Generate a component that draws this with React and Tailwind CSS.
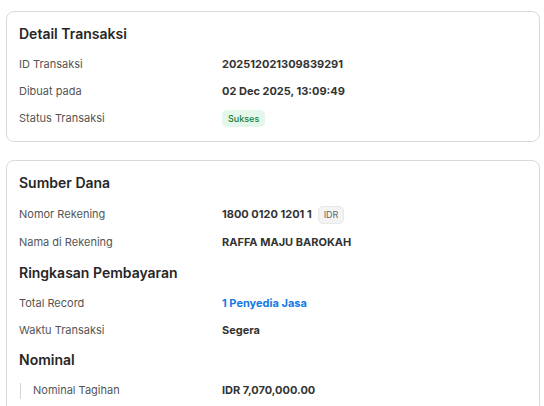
import React from 'react';

const Row = ({ label, children, nested, tall }) => (
  <div className={`flex items-center ${tall ? 'h-[29px]' : 'h-[27px]'}`}>
    {nested ? (
      <div className="w-[203px] flex items-center">
        <div className="w-px h-[16px] bg-[#d4d4d4] ml-[1px] mr-[12px]" />
        <span className="text-[11px] text-[#555555]">{label}</span>
      </div>
    ) : (
      <span className="w-[203px] text-[11px] text-[#555555]">{label}</span>
    )}
    <div className="flex items-center gap-[6px] text-[11px] font-bold text-[#333333]">{children}</div>
  </div>
);

const Heading = ({ children }) => (
  <h2 className="text-[14px] leading-[20px] font-semibold text-[#262626]">{children}</h2>
);

const Card = ({ children, className = '' }) => (
  <div className={`border border-[#d9d9d9] rounded-lg px-[12px] pt-[12px] bg-white ${className}`}>{children}</div>
);

export default function App() {
  return (
    <div className="min-h-screen bg-white pt-[11px] pl-[6px] pr-[4px] flex flex-col gap-[18px]" style={{ fontFamily: 'Inter, "Noto Sans", sans-serif' }}>
      <Card className="pb-[9px]">
        <Heading>Detail Transaksi</Heading>
        <div className="mt-[7px]">
          <Row label="ID Transaksi">202512021309839291</Row>
          <Row label="Dibuat pada">02 Dec 2025, 13:09:49</Row>
          <Row label="Status Transaksi">
            <span className="px-[6px] h-[17px] flex items-center rounded-[5px] bg-[#e5f6ea] text-[#17803d] text-[9px] font-medium">Sukses</span>
          </Row>
        </div>
      </Card>
      <Card className="pb-[8px]">
        <Heading>Sumber Dana</Heading>
        <div className="mt-[7px]">
          <Row label="Nomor Rekening" tall>
            <span>1800 0120 1201 1</span>
            <span className="px-[5px] h-[18px] flex items-center rounded-[5px] bg-[#f4f4f4] border border-[#e8e8e8] text-[#666666] text-[9px] font-normal">IDR</span>
          </Row>
          <Row label="Nama di Rekening">RAFFA MAJU BAROKAH</Row>
        </div>
        <div className="mt-[7px]">
          <Heading>Ringkasan Pembayaran</Heading>
        </div>
        <div className="mt-[7px]">
          <Row label="Total Record"><span className="text-[#1479e6]">1 Penyedia Jasa</span></Row>
          <Row label="Waktu Transaksi">Segera</Row>
        </div>
        <div className="mt-[6px]">
          <Heading>Nominal</Heading>
        </div>
        <div className="mt-[7px]">
          <Row label="Nominal Tagihan" nested>IDR 7,070,000.00</Row>
        </div>
      </Card>
    </div>
  );
}
